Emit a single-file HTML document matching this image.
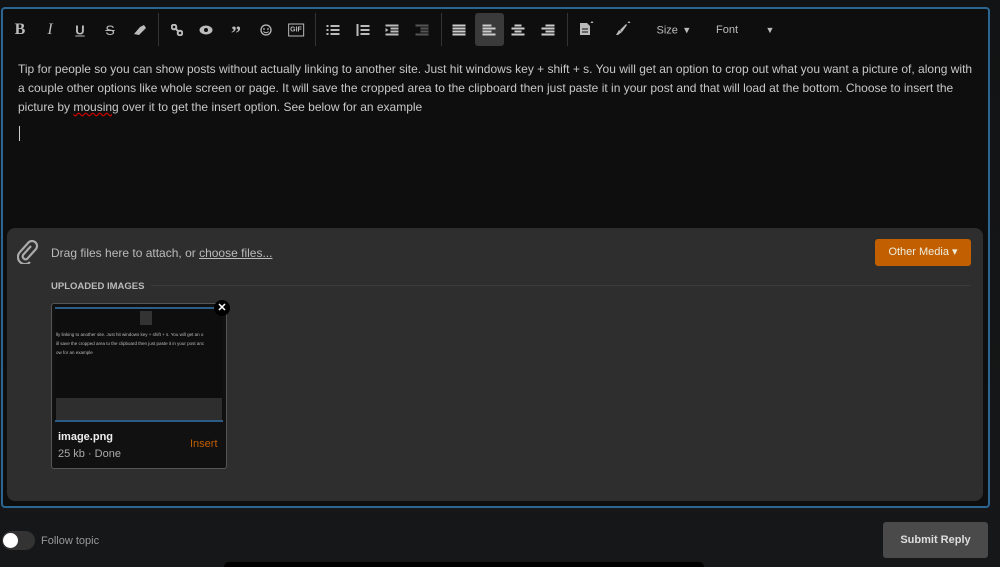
<!DOCTYPE html>
<html style="width:1000px;height:567px;overflow:hidden"><head><style>
*{margin:0;padding:0;box-sizing:border-box}
body{width:1000px;height:567px;overflow:hidden;background:linear-gradient(#121314,#161718);font-family:"Liberation Sans",sans-serif;position:relative;color:#ccc}
.ed{position:absolute;left:1px;top:7px;width:989px;height:501px;border:2px solid #2b6592;border-radius:4px;background:#0e0e0f}
.ti{position:absolute;top:30px;transform:translate(-50%,-50%);color:#bbb;font-size:15px;font-weight:bold}
.sep{position:absolute;top:13px;width:1px;height:33px;background:#333}
.txt{position:absolute;left:18px;top:60px;width:960px;font-size:12px;line-height:19px;color:#c8c8c8}
.att{position:absolute;left:7px;top:228px;width:976px;height:273px;background:#2e2e2e;border-radius:8px}
</style></head><body>
<div class="ed"></div>
<div class="ti" style="left:20px;font-family:'Liberation Serif';font-size:16px">B</div>
<div class="ti" style="left:50px;font-family:'Liberation Serif';font-style:italic;font-weight:normal;font-size:16px">I</div>
<div class="ti" style="left:80px;text-decoration:underline;font-size:13px">U</div>
<div class="ti" style="left:110px;text-decoration:line-through;font-weight:normal;font-size:14px">S</div>
<svg class="ti" style="left:140px" width="14" height="12"><path d="M1 10 L7 3 L11 1 L13 4 L6 11 Z" fill="#bbb"/></svg>
<div class="sep" style="left:158px"></div>
<svg class="ti" style="left:177px" width="12" height="12"><circle cx="3" cy="3" r="2.3" fill="none" stroke="#bbb" stroke-width="2"/><circle cx="9" cy="9" r="2.3" fill="none" stroke="#bbb" stroke-width="2"/><path d="M4 4L8 8" stroke="#bbb" stroke-width="2"/></svg>
<svg class="ti" style="left:206px" width="14" height="10"><ellipse cx="7" cy="5" rx="6.5" ry="4.5" fill="#bbb"/><circle cx="7" cy="5" r="2" fill="#0e0e0f"/></svg>
<div class="ti" style="left:236px;font-size:20px;top:34px;font-family:'Liberation Serif'">”</div>
<svg class="ti" style="left:266px" width="12" height="12"><circle cx="6" cy="6" r="5" fill="none" stroke="#bbb" stroke-width="1.3"/><circle cx="4" cy="5" r=".9" fill="#bbb"/><circle cx="8" cy="5" r=".9" fill="#bbb"/><path d="M3.5 7.5Q6 10 8.5 7.5" fill="none" stroke="#bbb"/></svg>
<div class="ti" style="left:296px;border:1px solid #bbb;font-size:7px;padding:2px 1px">GIF</div>
<div class="sep" style="left:315px"></div>
<svg class="ti" style="left:333px" width="13" height="11"><path d="M0 1.5h2M4 1.5h9M0 5.5h2M4 5.5h9M0 9.5h2M4 9.5h9" stroke="#bbb" stroke-width="2"/></svg>
<svg class="ti" style="left:363px" width="13" height="12"><path d="M1 0v12M4 2h9M4 6h9M4 10h9" stroke="#bbb" stroke-width="2"/></svg>
<svg class="ti" style="left:392px" width="13" height="11"><path d="M0 1h13M5 4h8M5 7h8M0 10h13" stroke="#bbb" stroke-width="2"/><path d="M0 3.5l3 2-3 2z" fill="#bbb"/></svg>
<svg class="ti" style="left:422px" width="13" height="11"><path d="M0 1h13M5 4h8M5 7h8M0 10h13" stroke="#555" stroke-width="2"/></svg>
<div class="sep" style="left:441px"></div>
<svg class="ti" style="left:459px" width="13" height="11"><path d="M0 1h13M0 4h13M0 7h13M0 10h13" stroke="#ccc" stroke-width="2"/></svg>
<div style="position:absolute;left:475px;top:13px;width:29px;height:33px;background:#3a3a3a;border-radius:3px"></div>
<svg class="ti" style="left:489px" width="13" height="11"><path d="M0 1h9M0 4h13M0 7h9M0 10h13" stroke="#ccc" stroke-width="2"/></svg>
<svg class="ti" style="left:518px" width="13" height="11"><path d="M3 1h7M0 4h13M3 7h7M0 10h13" stroke="#ccc" stroke-width="2"/></svg>
<svg class="ti" style="left:548px" width="13" height="11"><path d="M4 1h9M0 4h13M4 7h9M0 10h13" stroke="#ccc" stroke-width="2"/></svg>
<div class="sep" style="left:567px"></div>
<svg class="ti" style="left:587px;top:28px" width="16" height="16"><path d="M1 3h7l3 3v9H1z" fill="#bbb"/><path d="M3 9h6M3 12h6" stroke="#0e0e0f"/><path d="M13 1l1.5 2h-3z" fill="#bbb"/></svg>
<svg class="ti" style="left:623px;top:28px" width="18" height="16"><path d="M2 15l3-5 3 2-4 3z" fill="#bbb"/><path d="M6 10l6-6 1 1-5 7z" fill="#bbb"/><path d="M15 1l1.5 2h-3z" fill="#bbb"/></svg>
<div class="ti" style="left:673px;font-weight:normal;font-size:11px;color:#bbb">Size &nbsp;▾</div>
<div class="ti" style="left:727px;font-weight:normal;font-size:11px;color:#bbb">Font</div>
<div class="ti" style="left:770px;font-weight:normal;font-size:9px;color:#bbb">▼</div>
<div class="txt">Tip for people so you can show posts without actually linking to another site. Just hit windows key + shift + s. You will get an option to crop out what you want a picture of, along with a couple other options like whole screen or page. It will save the cropped area to the clipboard then just paste it in your post and that will load at the bottom. Choose to insert the picture by <span style="text-decoration:underline wavy #c00">mousing</span> over it to get the insert option. See below for an example</div>
<div style="position:absolute;left:19px;top:126px;width:1px;height:15px;background:#ccc"></div>
<div class="att"></div>
<svg style="position:absolute;left:17px;top:240px" width="22" height="24" viewBox="0 0 22 24"><path d="M14 6L6 15a3 3 0 0 0 4 4l9-10a5 5 0 0 0-7-7L3 12a7 7 0 0 0 10 10" fill="none" stroke="#aaa" stroke-width="2.2"/></svg>
<div style="position:absolute;left:51px;top:246px;font-size:12px;color:#bbb">Drag files here to attach, or <u>choose files...</u></div>
<div style="position:absolute;left:875px;top:239px;width:96px;height:27px;background:#c25f00;border-radius:3px;font-size:11px;color:#eed;text-align:center;line-height:27px">Other Media ▾</div>
<div style="position:absolute;left:51px;top:281px;font-size:9.5px;font-weight:bold;color:#bbb">UPLOADED IMAGES</div>
<div style="position:absolute;left:151px;top:285px;width:820px;height:1px;background:#3b3b3b"></div>
<div style="position:absolute;left:51px;top:303px;width:176px;height:166px;border:1px solid #555;border-radius:3px;background:#111"></div>
<div style="position:absolute;left:55px;top:307px;width:168px;height:115px;background:#0e0e0f;border-top:2px solid #2b5d86;border-bottom:2px solid #2b5d86"></div>
<div style="position:absolute;left:140px;top:311px;width:12px;height:14px;background:#333"></div>
<div style="position:absolute;left:56px;top:330px;width:166px;font-size:4.5px;line-height:9px;color:#bbb;white-space:nowrap;overflow:hidden">lly linking to another site. Just hit windows key + shift + s. You will get an o<br>ill save the cropped area to the clipboard then just paste it in your post anc<br>ow for an example</div>
<div style="position:absolute;left:56px;top:398px;width:166px;height:22px;background:#2e2e2e"></div>
<div style="position:absolute;left:214px;top:300px;width:16px;height:16px;border-radius:50%;background:#000;color:#fff;font-size:11px;text-align:center;line-height:16px;font-weight:bold">✕</div>
<div style="position:absolute;left:58px;top:431px;font-size:11px;font-weight:bold;color:#eee">image.png</div>
<div style="position:absolute;left:58px;top:448px;font-size:11px;color:#aaa">25 kb · Done</div>
<div style="position:absolute;left:190px;top:438px;font-size:11px;color:#c25f00">Insert</div>
<div style="position:absolute;left:2px;top:531px;width:33px;height:19px;border-radius:10px;background:#333"></div>
<div style="position:absolute;left:3px;top:533px;width:15px;height:15px;border-radius:50%;background:#fff"></div>
<div style="position:absolute;left:41px;top:535px;font-size:11px;color:#999">Follow topic</div>
<div style="position:absolute;left:883px;top:522px;width:105px;height:36px;background:#4a4a4a;border-radius:3px;font-size:11px;font-weight:bold;color:#ddd;text-align:center;line-height:36px">Submit Reply</div>
<div style="position:absolute;left:224px;top:562px;width:480px;height:5px;background:#000;border-radius:12px 12px 0 0"></div>
</body></html>
